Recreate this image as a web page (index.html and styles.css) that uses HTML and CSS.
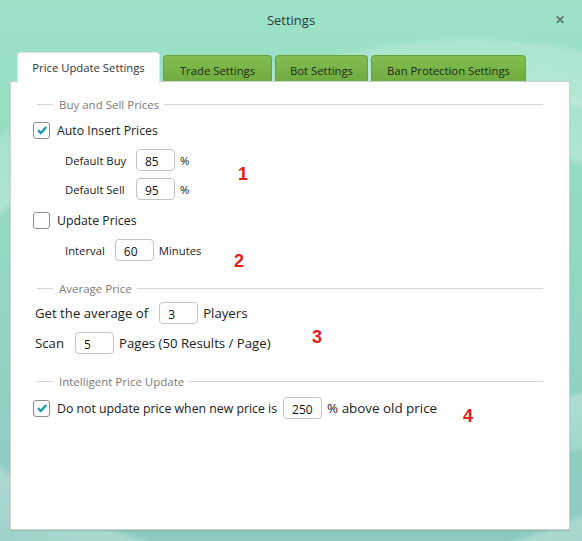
FILE: index.html
```html
<!DOCTYPE html>
<html>
<head>
<meta charset="utf-8">
<link rel="stylesheet" href="styles.css">
</head>
<body>
<div class="window">
  <div class="titlebar">
    <span class="title">Settings</span>
    <span class="close">&#x2715;</span>
  </div>
  <div class="tabs">
    <div class="tab active">Price Update Settings</div>
    <div class="tab">Trade Settings</div>
    <div class="tab">Bot Settings</div>
    <div class="tab">Ban Protection Settings</div>
  </div>
  <div class="panel">
    <div class="group-head g1"><span class="lead"></span><span class="gtext">Buy and Sell Prices</span><span class="rule"></span></div>
    <div class="row r-auto"><span class="cb checked"><svg viewBox="0 0 12 12" width="12" height="12"><path d="M2 6.2 L4.8 9 L10.2 3" fill="none" stroke="#1c9cb2" stroke-width="2.4"/></svg></span><span class="lbl">Auto Insert Prices</span></div>
    <div class="row sub r-buy"><span class="sublbl wide">Default Buy</span><span class="inp">85</span><span class="after">%</span></div>
    <div class="row sub r-sell"><span class="sublbl wide">Default Sell</span><span class="inp">95</span><span class="after">%</span></div>
    <div class="row r-upd"><span class="cb"></span><span class="lbl">Update Prices</span></div>
    <div class="row sub r-int"><span class="sublbl">Interval</span><span class="inp">60</span><span class="after">Minutes</span></div>

    <div class="group-head g2"><span class="lead"></span><span class="gtext">Average Price</span><span class="rule"></span></div>
    <div class="row plain r-avg"><span class="lbl">Get the average of</span><span class="inp">3</span><span class="after">Players</span></div>
    <div class="row plain r-scan"><span class="lbl scan">Scan</span><span class="inp">5</span><span class="after">Pages (50 Results / Page)</span></div>

    <div class="group-head g3"><span class="lead"></span><span class="gtext">Intelligent Price Update</span><span class="rule"></span></div>
    <div class="row r-dn"><span class="cb checked"><svg viewBox="0 0 12 12" width="12" height="12"><path d="M2 6.2 L4.8 9 L10.2 3" fill="none" stroke="#1c9cb2" stroke-width="2.4"/></svg></span><span class="lbl">Do not update price when new price is</span><span class="inp small-gap">250</span><span class="after big">% above old price</span></div>

    <span class="num n1">1</span>
    <span class="num n2">2</span>
    <span class="num n3">3</span>
    <span class="num n4">4</span>
  </div>
</div>
</body>
</html>
```

FILE: styles.css
```css
html, body {
  margin: 0;
  padding: 0;
}
body {
  width: 582px;
  height: 541px;
  overflow: hidden;
  font-family: "Open Sans", "Noto Sans", sans-serif;
  font-size: 12px;
  color: #222;
  background:
    radial-gradient(ellipse 420px 260px at 470px 250px, rgba(255,255,255,0) 60%, rgba(255,255,255,0.28) 62%, rgba(255,255,255,0.16) 80%, rgba(255,255,255,0) 82%),
    radial-gradient(ellipse 560px 320px at 330px 340px, rgba(255,255,255,0) 70%, rgba(255,255,255,0.26) 72%, rgba(255,255,255,0.14) 86%, rgba(255,255,255,0) 88%),
    linear-gradient(to bottom, #9ee3c8 0%, #95dcc3 30%, #8fd2c0 70%, #8ecbbf 100%);
}
.window {
  width: 582px;
  height: 541px;
  display: flex;
  flex-direction: column;
}
.titlebar {
  height: 40px;
  position: relative;
  display: flex;
  align-items: center;
  justify-content: center;
}
.title {
  font-size: 13px;
  color: #2d3a36;
}
.close {
  position: absolute;
  right: 17px;
  top: 11px;
  font-size: 12px;
  font-weight: bold;
  color: #62756f;
}
.tabs {
  display: flex;
  align-items: flex-end;
  margin-left: 17px;
  margin-top: 11px;
  gap: 3px;
  height: 30px;
  position: relative;
  z-index: 2;
}
.tab {
  height: 26px;
  display: flex;
  align-items: center;
  justify-content: center;
  white-space: nowrap;
  border-radius: 4px 4px 0 0;
  background: linear-gradient(to bottom, #82be52, #6fab3e);
  border: 1px solid #69a43a;
  border-bottom: none;
  color: #1d2a14;
  font-size: 11.3px;
  box-sizing: border-box;
  padding-top: 3px;
}
.tab:nth-child(2) { width: 109px; }
.tab:nth-child(3) { width: 93px; }
.tab:nth-child(4) { width: 155px; }
.tab.active {
  width: 143px;
  height: 31px;
  margin-bottom: -2px;
  background: #fff;
  border: 1px solid #e2e2e2;
  border-bottom: none;
  color: #333;
  padding-top: 0;
  padding-bottom: 2px;
}
.panel {
  position: relative;
  margin: 0 12px 0 10px;
  height: 449px;
  background: #fff;
  border: 1px solid #cfcfcf;
  border-radius: 2px;
  box-sizing: border-box;
  padding: 15px 26px 0 22px;
  display: flex;
  flex-direction: column;
  box-shadow: 0 1px 1px rgba(0,0,0,0.12);
}
.group-head {
  height: 14px;
  display: flex;
  align-items: center;
  margin-left: 4px;
  color: #7c7c7c;
  font-size: 11.5px;
}
.group-head .lead {
  width: 16px;
  height: 1px;
  background: #d4d4d4;
  margin-right: 6px;
}
.group-head .rule {
  flex: 1;
  height: 1px;
  background: #d4d4d4;
  margin-left: 5px;
}
.g2 { margin-top: 20px; }
.g3 { margin-top: 20px; }
.row {
  height: 22px;
  display: flex;
  align-items: center;
  font-size: 12.3px;
}
.r-auto { margin-top: 8px; }
.r-buy { margin-top: 8px; }
.r-sell { margin-top: 7px; }
.r-upd { margin-top: 9px; }
.r-int { margin-top: 8px; }
.r-avg { margin-top: 7px; }
.r-scan { margin-top: 8px; }
.r-dn { margin-top: 9px; }
.sub {
  padding-left: 32px;
  font-size: 11.3px;
}
.plain {
  padding-left: 2px;
  font-size: 13.2px;
}
.cb {
  width: 17px;
  height: 17px;
  box-sizing: border-box;
  border: 1px solid #8f8f8f;
  border-radius: 3px;
  margin-right: 7px;
  display: flex;
  align-items: center;
  justify-content: center;
  background: #fff;
}
.sublbl { margin-right: 10px; }
.sublbl.wide { width: 71px; margin-right: 0; }
.plain .lbl { margin-right: 11px; }
.plain .lbl.scan { margin-right: 11px; }
.inp {
  width: 39px;
  height: 22px;
  box-sizing: border-box;
  border: 1px solid #c4c4c4;
  border-radius: 4px;
  padding: 3px 0 0 8px;
  font-size: 12px;
  display: flex;
  align-items: center;
  color: #111;
}
.small-gap { margin-left: 6px; }
.after { margin-left: 5px; }
.after.big { font-size: 13.4px; }
.num {
  position: absolute;
  color: #e0201a;
  font-family: "Liberation Sans", Arial, sans-serif;
  font-weight: bold;
  font-size: 18px;
  line-height: 18px;
}
.n1 { left: 227px; top: 83px; }
.n2 { left: 223px; top: 170px; }
.n3 { left: 301px; top: 246px; }
.n4 { left: 452px; top: 325px; }
```
